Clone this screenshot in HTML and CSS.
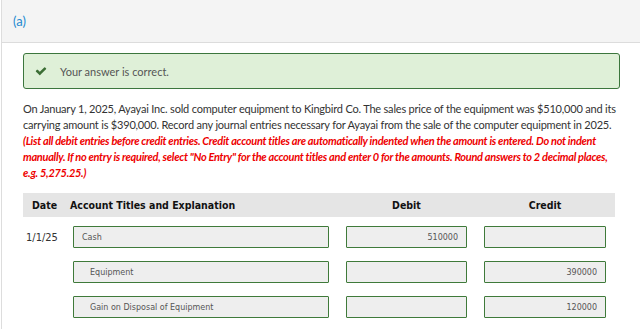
FILE: index.html
```html
<!DOCTYPE html>
<html lang="en">

<head>
    <meta charset="UTF-8">
    <meta name="viewport" content="width=device-width, initial-scale=1.0">
    <title>Part (a)</title>
    <link rel="stylesheet" href="styles.css">
</head>

<body>
    <div class="panel">
        <header class="part-head">
            <span class="part-label">(a)</span>
        </header>

        <div class="content">
            <div class="alert-success">
                <svg class="check" viewBox="0 0 1792 1792" width="12" height="12">
                    <path fill="currentColor" d="M1671 566q0 40-28 68l-724 724-136 136q-28 28-68 28t-68-28l-136-136-362-362q-28-28-28-68t28-68l136-136q28-28 68-28t68 28l294 295 656-657q28-28 68-28t68 28l136 136q28 28 28 68z"/>
                </svg>
                <span>Your answer is correct.</span>
            </div>

            <div class="question">
                <p>On January 1, 2025, Ayayai Inc. sold computer equipment to Kingbird Co. The sales price of the equipment was $510,000 and its carrying amount is $390,000. Record any journal entries necessary for Ayayai from the sale of the computer equipment in 2025.</p>
                <p class="hint">(List all debit entries before credit entries. Credit account titles are automatically indented when the amount is entered. Do not indent manually. If no entry is required, select "No Entry" for the account titles and enter 0 for the amounts. Round answers to 2 decimal places, e.g. 5,275.25.)</p>
            </div>

            <div class="journal">
                <div class="journal-head">
                    <span class="col-date">Date</span>
                    <span class="col-account">Account Titles and Explanation</span>
                    <span class="col-amount">Debit</span>
                    <span class="col-amount">Credit</span>
                </div>

                <div class="journal-row">
                    <span class="entry-date">1/1/25</span>
                    <input class="field" type="text" value="Cash" readonly>
                    <input class="field amount" type="text" value="510000" readonly>
                    <input class="field amount" type="text" value="" readonly>
                </div>

                <div class="journal-row">
                    <span class="entry-date"></span>
                    <input class="field indent" type="text" value="Equipment" readonly>
                    <input class="field amount" type="text" value="" readonly>
                    <input class="field amount" type="text" value="390000" readonly>
                </div>

                <div class="journal-row">
                    <span class="entry-date"></span>
                    <input class="field indent" type="text" value="Gain on Disposal of Equipment" readonly>
                    <input class="field amount" type="text" value="" readonly>
                    <input class="field amount" type="text" value="120000" readonly>
                </div>
            </div>
        </div>
    </div>
</body>

</html>
```

FILE: styles.css
```css
body {
    margin: 0;
    padding: 0;
    background: #ffffff;
    font-family: 'Lato', 'Open Sans', sans-serif;
    color: #333333;
}

.panel {
    margin-left: 1px;
    border-left: 1px solid #dddddd;
    min-height: 329px;
}

.part-head {
    height: 42px;
    background: #f4f4f4;
    border-bottom: 1px solid #dcdcdc;
    display: flex;
    align-items: center;
    padding-left: 11px;
}

.part-label {
    color: #1f8ad0;
    font-size: 13px;
    margin-top: -1px;
}

.content {
    padding: 10px 20px 0 21px;
}

.alert-success {
    display: flex;
    align-items: center;
    height: 34px;
    background: #dff0d8;
    border: 1px solid #3c763d;
    border-radius: 3px;
    padding-left: 11px;
    font-size: 11px;
    color: #555555;
}

.check {
    color: #3c6e35;
    margin-right: 13px;
}

.question {
    margin-top: 12px;
    font-size: 11px;
    line-height: 16px;
    letter-spacing: -0.2px;
    color: #333333;
}

.question p {
    margin: 0;
}

.question .hint {
    color: #ee0000;
    font-weight: bold;
    font-style: italic;
    letter-spacing: -0.3px;
}

.journal {
    margin-top: 12px;
}

.journal-head {
    display: grid;
    grid-template-columns: 33px 256px 121px 122px;
    column-gap: 17px;
    align-items: center;
    width: 592px;
    height: 24px;
    background: #e5e5e5;
    font-family: 'DejaVu Sans Condensed', 'DejaVu Sans', sans-serif;
    font-weight: bold;
    font-size: 10.5px;
    color: #111111;
}

.col-date {
    padding-left: 9px;
}

.col-account {
    margin-left: -3px;
}

.col-amount {
    text-align: center;
}

.journal-row {
    display: grid;
    grid-template-columns: 33px 256px 121px 122px;
    column-gap: 17px;
    align-items: center;
    margin-top: 9px;
    margin-bottom: 13px;
}

.journal-row + .journal-row {
    margin-top: 0;
}

.entry-date {
    padding-left: 3px;
    font-family: 'DejaVu Sans Condensed', 'DejaVu Sans', sans-serif;
    font-size: 11px;
    color: #333333;
}

.field {
    box-sizing: border-box;
    height: 22px;
    width: 100%;
    margin: 0;
    padding: 0 8px;
    background: #eeeeee;
    border: 1px solid #3f7a3a;
    border-radius: 1px;
    font-family: 'DejaVu Sans', sans-serif;
    font-size: 8px;
    color: #555555;
    outline: none;
}

.field.indent {
    padding-left: 16px;
}

.field.amount {
    text-align: right;
}
```
